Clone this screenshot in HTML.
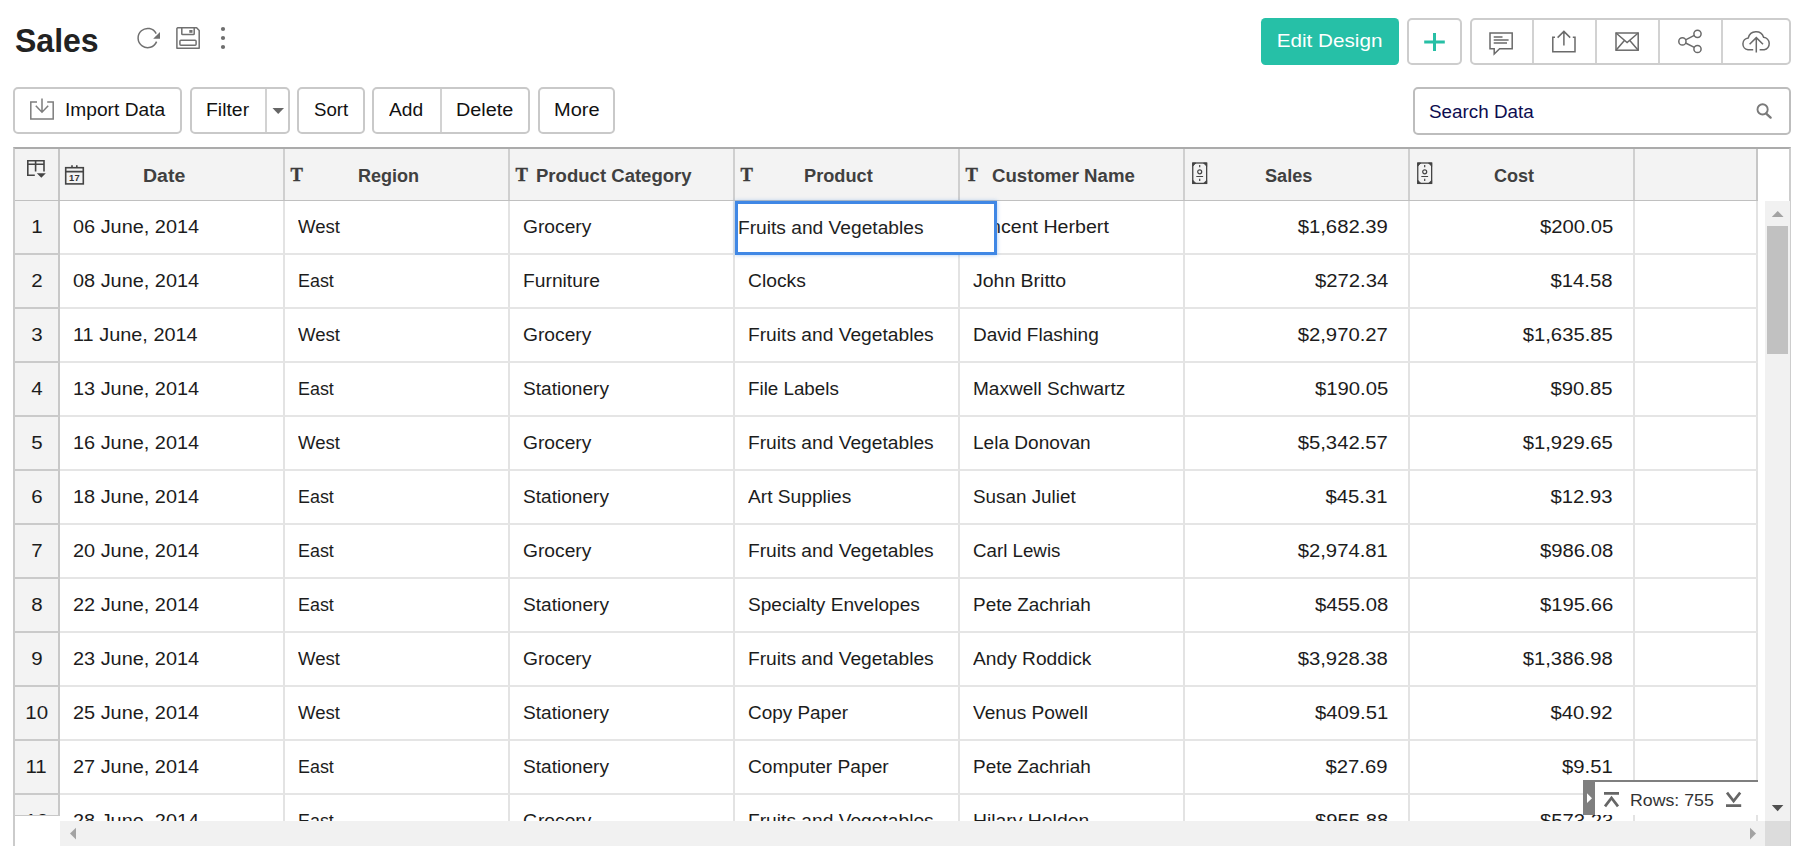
<!DOCTYPE html>
<html><head><meta charset="utf-8"><title>Sales</title>
<style>
*{box-sizing:border-box;margin:0;padding:0}
html,body{width:1804px;height:846px;overflow:hidden;background:#fff;font-family:"Liberation Sans",sans-serif;color:#222}
body{position:relative}
.abs{position:absolute}
svg{position:absolute;overflow:visible}
h1{position:absolute;left:14.7px;top:21px;font-size:32.5px;line-height:40px;font-weight:bold;color:#222;letter-spacing:0;transform:scaleX(0.985);transform-origin:0 50%}
.btn{position:absolute;top:87px;height:47px;border:2px solid #c9c9c9;border-radius:5px;background:#fff;font-size:17.5px;line-height:42px;color:#111;white-space:nowrap;letter-spacing:0}
.btn span.t{position:absolute;top:0;transform-origin:0 50%}
.btn .sep{position:absolute;top:0;bottom:0;width:2px;background:#d2d2d2}
.tbtn{position:absolute;top:18px;height:47px;border:2px solid #cdcdcd;border-radius:5px;background:#fff}
.tbtn .sep{position:absolute;top:0;bottom:0;width:2px;background:#d2d2d2}
.edit{position:absolute;left:1261px;top:18px;width:138px;height:47px;border-radius:4.5px;background:#26c0a7;color:#fff;font-size:19px;line-height:46.6px;text-align:center;letter-spacing:0}
.edit span{display:inline-block;transform:scaleX(1.088);transform-origin:50% 50%}
.search{position:absolute;left:1413px;top:87px;width:378px;height:48px;border:2px solid #bdbdbd;border-radius:5px;font-size:17.5px;line-height:46px;padding-left:14px;color:#0d0d50;letter-spacing:0}
.search span{display:inline-block;transform:scaleX(1.076);transform-origin:0 50%}
/* table */
.grid{position:absolute;left:13px;top:147px;width:1778px;height:700px;border-top:2px solid #ababab;border-left:2px solid #cbcbcb;border-right:2px solid #cdcdcd;overflow:hidden}
.thead{position:absolute;left:0;top:0;height:52px;width:1743px;background:#f3f3f3;display:flex}
.thead:after{content:"";position:absolute;left:0;right:0;top:50.5px;height:1.5px;background:#c0c0c0}
.th{height:51px;border-right:2px solid #cfcfcf;font-weight:bold;font-size:17.5px;color:#404040;line-height:54px;position:relative;flex:none;width:225px;letter-spacing:0}
.th.rn{width:45px;border-right:2px solid #c6c6c6}
.th.last{width:123px;border-right:2px solid #c6c6c6}
.th .lbl{position:absolute;top:0;white-space:nowrap;transform-origin:0 50%}
.th .T{position:absolute;left:5.4px;top:-1.25px;font-family:"Liberation Serif",serif;font-weight:bold;font-size:18.6px;color:#3c3c3c;letter-spacing:0;-webkit-text-stroke:0.35px #3c3c3c}
.tbody{position:absolute;left:0;top:52px;width:1743px}
.tr{display:flex;height:54px}
.td{flex:none;width:225px;height:54px;border-right:2px solid #e3e3e3;border-bottom:2px solid #e5e5e5;font-size:17.5px;line-height:52px;padding-left:13px;color:#1c1c1c;white-space:nowrap;overflow:hidden;letter-spacing:0}
.sx{display:inline-block;transform:scaleX(1.082);transform-origin:0 50%}
.td.date .sx{transform:scaleX(1.137)}
.td.num .sx{transform:scaleX(1.158);transform-origin:100% 50%}
.td.rn .sx{transform:scaleX(1.17);transform-origin:50% 50%}
.td.rn{width:45px;background:#f3f3f3;text-align:center;padding:0;border-right:2px solid #c8c8c8;border-bottom:2px solid #cacaca}
.td.num{text-align:right;padding-right:20px;padding-left:0}
.td.last{width:123px}
.vsb{position:absolute;left:1765px;top:201px;width:25px;height:620px;background:#f1f1f1}
.hsb{position:absolute;left:60px;top:821px;width:1705px;height:25px;background:#f1f1f1}
.corner{position:absolute;left:1765px;top:821px;width:25px;height:25px;background:#dcdcdc}
.editbox{position:absolute;left:735px;top:201px;width:262px;height:54px;border:3px solid #3f87e5;background:#fff;box-shadow:0 0 4px rgba(63,135,229,.45);font-size:17.5px;line-height:48px;padding-left:0;letter-spacing:0;color:#222;white-space:nowrap}
.rowsw{position:absolute;left:1583px;top:780px;width:175px;height:35px;background:#fff;border-top:2px solid #7f7f7f;font-size:16.5px;line-height:36px;color:#333}
.rowsw .h{position:absolute;left:0;top:-2px;width:12px;height:35px;background:#7f7f7f}
</style></head><body>
<h1>Sales</h1>

<!-- title icons -->
<svg style="left:125px;top:15px" width="120" height="50" viewBox="125 15 120 50" fill="none" stroke="#707070" stroke-width="1.5">
 <path d="M156.2 33.6 A9.6 9.6 0 1 0 156.6 41.6"/>
 <path d="M160 32 L160 38.7 L153.2 38.7 Z" fill="#707070" stroke="none"/>
 <path d="M177.6 27.8 H196.6 L199.2 30.6 V48.2 H176.9 V28.6 Z" stroke-linejoin="round"/>
 <path d="M181.8 28 V33.8 Q181.8 34.6 182.6 34.6 H193.4 Q194.2 34.6 194.2 33.8 V28"/>
 <rect x="189.3" y="30" width="3.2" height="2.8" fill="#707070" stroke="none"/>
 <rect x="179.9" y="40.2" width="16.2" height="5" rx="1"/>
 <circle cx="223" cy="29" r="2.1" fill="#6e6e6e" stroke="none"/>
 <circle cx="223" cy="38" r="2.1" fill="#6e6e6e" stroke="none"/>
 <circle cx="223" cy="47" r="2.1" fill="#6e6e6e" stroke="none"/>
</svg>

<div class="edit"><span>Edit Design</span></div>
<div class="tbtn" style="left:1407px;width:55px"></div>
<div class="tbtn" style="left:1470px;width:321px">
 <span class="sep" style="left:60px"></span><span class="sep" style="left:123px"></span><span class="sep" style="left:186px"></span><span class="sep" style="left:249px"></span>
</div>
<svg style="left:1400px;top:10px" width="400" height="65" viewBox="1400 10 400 65" fill="none" stroke="#6a6a6a" stroke-width="1.5">
 <path d="M1424.2 42 H1444.8 M1434.5 33 V51" stroke="#27bfa5" stroke-width="3"/>
 <!-- comment -->
 <path d="M1490 33 H1512.2 V48.7 H1499.6 L1494.2 54 V48.7 H1490 Z"/>
 <path d="M1493.7 37 H1502.5 M1493.7 40 H1508.6 M1493.7 43 H1507"/>
 <!-- export -->
 <path d="M1555 37.2 H1552.8 V51.7 H1575 V37.2 H1572.8"/>
 <path d="M1563.9 31.4 V45.5 M1557.6 37.6 L1563.9 31.4 L1570.2 37.6"/>
 <!-- mail -->
 <rect x="1616" y="33" width="22.2" height="17.2"/>
 <path d="M1616 33 L1627.1 42.6 L1638.2 33 M1616 50.2 L1624.4 40.4 M1638.2 50.2 L1629.8 40.4"/>
 <!-- share -->
 <circle cx="1697.5" cy="33.8" r="3.6"/><circle cx="1682.4" cy="41.4" r="3.6"/><circle cx="1697.5" cy="49" r="3.6"/>
 <path d="M1685.6 39.8 L1694.3 35.4 M1685.6 43 L1694.3 47.4"/>
 <!-- cloud -->
 <path d="M1753.2 49.8 H1748 A6 6 0 0 1 1748.3 37.9 A8 8 0 0 1 1763.6 37.2 A6.4 6.4 0 0 1 1764.2 49.8 H1759.6"/>
 <path d="M1756.3 52.6 V37.6 M1749.6 44.3 L1756.3 37.6 L1763 44.3"/>
</svg>

<!-- toolbar -->
<div class="btn" style="left:13px;width:169px"><span class="t" style="left:50px;transform:scaleX(1.095)">Import Data</span></div>
<div class="btn" style="left:190px;width:100px"><span class="sep" style="left:73px"></span><span class="t" style="left:13.5px;transform:scaleX(1.108)">Filter</span></div>
<div class="btn" style="left:297px;width:68px"><span class="t" style="left:14.5px;transform:scaleX(1.065)">Sort</span></div>
<div class="btn" style="left:372px;width:158px"><span class="sep" style="left:66px"></span><span class="t" style="left:15px;transform:scaleX(1.097)">Add</span><span class="t" style="left:82px;transform:scaleX(1.133)">Delete</span></div>
<div class="btn" style="left:538px;width:77px"><span class="t" style="left:13.5px;transform:scaleX(1.143)">More</span></div>
<svg style="left:10px;top:80px" width="300" height="60" viewBox="10 80 300 60" fill="none" stroke="#7d7d7d" stroke-width="1.5">
 <path d="M37 102 H30.8 V119 H53.2 V102 H47.2"/>
 <path d="M42 98.5 V112 M35.8 105.8 L42 112.2 L48.2 105.8"/>
 <path d="M272.5 108 H284 L278.2 114 Z" fill="#666" stroke="none"/>
</svg>
<div class="search"><span>Search Data</span></div>
<svg style="left:1750px;top:98px" width="30" height="26" viewBox="1750 98 30 26" fill="none" stroke="#7a7a7a">
 <circle cx="1762.6" cy="109.4" r="5.1" stroke-width="1.9"/>
 <path d="M1766.5 113.9 L1770.6 117.6" stroke-width="2.4" stroke-linecap="round"/>
</svg>

<div class="grid">
 <div class="thead">
  <div class="th rn"></div>
  <div class="th"><span class="lbl" style="left:82.6px;transform:scaleX(1.114)">Date</span></div>
  <div class="th"><span class="T">T</span><span class="lbl" style="left:73.3px;transform:scaleX(1.03)">Region</span></div>
  <div class="th"><span class="T">T</span><span class="lbl" style="left:26px;transform:scaleX(1.06)">Product Category</span></div>
  <div class="th"><span class="T">T</span><span class="lbl" style="left:69px;transform:scaleX(1.04)">Product</span></div>
  <div class="th"><span class="T">T</span><span class="lbl" style="left:32px;transform:scaleX(1.064)">Customer Name</span></div>
  <div class="th"><span class="lbl" style="left:80px;transform:scaleX(1.035)">Sales</span></div>
  <div class="th"><span class="lbl" style="left:83.5px;transform:scaleX(1.03)">Cost</span></div>
  <div class="th last"></div>
 </div>
 <div class="tbody">
<div class="tr"><div class="td rn"><span class="sx">1</span></div><div class="td date"><span class="sx">06 June, 2014</span></div><div class="td"><span class="sx" style="transform:scaleX(1.0625)">West</span></div><div class="td"><span class="sx" style="transform:scaleX(1.0987)">Grocery</span></div><div class="td"><span class="sx" style="transform:scaleX(1.097)">Fruits and Vegetables</span></div><div class="td"><span class="sx" style="transform:scaleX(1.12)">Vincent Herbert</span></div><div class="td num"><span class="sx">$1,682.39</span></div><div class="td num"><span class="sx">$200.05</span></div><div class="td last"></div></div>
<div class="tr"><div class="td rn"><span class="sx">2</span></div><div class="td date"><span class="sx">08 June, 2014</span></div><div class="td"><span class="sx" style="transform:scaleX(1.0235)">East</span></div><div class="td"><span class="sx" style="transform:scaleX(1.1004)">Furniture</span></div><div class="td"><span class="sx" style="transform:scaleX(1.101)">Clocks</span></div><div class="td"><span class="sx" style="transform:scaleX(1.112)">John Britto</span></div><div class="td num"><span class="sx">$272.34</span></div><div class="td num"><span class="sx">$14.58</span></div><div class="td last"></div></div>
<div class="tr"><div class="td rn"><span class="sx">3</span></div><div class="td date"><span class="sx">11 June, 2014</span></div><div class="td"><span class="sx" style="transform:scaleX(1.0625)">West</span></div><div class="td"><span class="sx" style="transform:scaleX(1.0987)">Grocery</span></div><div class="td"><span class="sx" style="transform:scaleX(1.097)">Fruits and Vegetables</span></div><div class="td"><span class="sx" style="transform:scaleX(1.086)">David Flashing</span></div><div class="td num"><span class="sx">$2,970.27</span></div><div class="td num"><span class="sx">$1,635.85</span></div><div class="td last"></div></div>
<div class="tr"><div class="td rn"><span class="sx">4</span></div><div class="td date"><span class="sx">13 June, 2014</span></div><div class="td"><span class="sx" style="transform:scaleX(1.0235)">East</span></div><div class="td"><span class="sx" style="transform:scaleX(1.0918)">Stationery</span></div><div class="td"><span class="sx" style="transform:scaleX(1.073)">File Labels</span></div><div class="td"><span class="sx" style="transform:scaleX(1.087)">Maxwell Schwartz</span></div><div class="td num"><span class="sx">$190.05</span></div><div class="td num"><span class="sx">$90.85</span></div><div class="td last"></div></div>
<div class="tr"><div class="td rn"><span class="sx">5</span></div><div class="td date"><span class="sx">16 June, 2014</span></div><div class="td"><span class="sx" style="transform:scaleX(1.0625)">West</span></div><div class="td"><span class="sx" style="transform:scaleX(1.0987)">Grocery</span></div><div class="td"><span class="sx" style="transform:scaleX(1.097)">Fruits and Vegetables</span></div><div class="td"><span class="sx" style="transform:scaleX(1.089)">Lela Donovan</span></div><div class="td num"><span class="sx">$5,342.57</span></div><div class="td num"><span class="sx">$1,929.65</span></div><div class="td last"></div></div>
<div class="tr"><div class="td rn"><span class="sx">6</span></div><div class="td date"><span class="sx">18 June, 2014</span></div><div class="td"><span class="sx" style="transform:scaleX(1.0235)">East</span></div><div class="td"><span class="sx" style="transform:scaleX(1.0918)">Stationery</span></div><div class="td"><span class="sx" style="transform:scaleX(1.095)">Art Supplies</span></div><div class="td"><span class="sx" style="transform:scaleX(1.077)">Susan Juliet</span></div><div class="td num"><span class="sx">$45.31</span></div><div class="td num"><span class="sx">$12.93</span></div><div class="td last"></div></div>
<div class="tr"><div class="td rn"><span class="sx">7</span></div><div class="td date"><span class="sx">20 June, 2014</span></div><div class="td"><span class="sx" style="transform:scaleX(1.0235)">East</span></div><div class="td"><span class="sx" style="transform:scaleX(1.0987)">Grocery</span></div><div class="td"><span class="sx" style="transform:scaleX(1.097)">Fruits and Vegetables</span></div><div class="td"><span class="sx" style="transform:scaleX(1.07)">Carl Lewis</span></div><div class="td num"><span class="sx">$2,974.81</span></div><div class="td num"><span class="sx">$986.08</span></div><div class="td last"></div></div>
<div class="tr"><div class="td rn"><span class="sx">8</span></div><div class="td date"><span class="sx">22 June, 2014</span></div><div class="td"><span class="sx" style="transform:scaleX(1.0235)">East</span></div><div class="td"><span class="sx" style="transform:scaleX(1.0918)">Stationery</span></div><div class="td"><span class="sx" style="transform:scaleX(1.09)">Specialty Envelopes</span></div><div class="td"><span class="sx" style="transform:scaleX(1.082)">Pete Zachriah</span></div><div class="td num"><span class="sx">$455.08</span></div><div class="td num"><span class="sx">$195.66</span></div><div class="td last"></div></div>
<div class="tr"><div class="td rn"><span class="sx">9</span></div><div class="td date"><span class="sx">23 June, 2014</span></div><div class="td"><span class="sx" style="transform:scaleX(1.0625)">West</span></div><div class="td"><span class="sx" style="transform:scaleX(1.0987)">Grocery</span></div><div class="td"><span class="sx" style="transform:scaleX(1.097)">Fruits and Vegetables</span></div><div class="td"><span class="sx" style="transform:scaleX(1.096)">Andy Roddick</span></div><div class="td num"><span class="sx">$3,928.38</span></div><div class="td num"><span class="sx">$1,386.98</span></div><div class="td last"></div></div>
<div class="tr"><div class="td rn"><span class="sx">10</span></div><div class="td date"><span class="sx">25 June, 2014</span></div><div class="td"><span class="sx" style="transform:scaleX(1.0625)">West</span></div><div class="td"><span class="sx" style="transform:scaleX(1.0918)">Stationery</span></div><div class="td"><span class="sx" style="transform:scaleX(1.082)">Copy Paper</span></div><div class="td"><span class="sx" style="transform:scaleX(1.094)">Venus Powell</span></div><div class="td num"><span class="sx">$409.51</span></div><div class="td num"><span class="sx">$40.92</span></div><div class="td last"></div></div>
<div class="tr"><div class="td rn"><span class="sx">11</span></div><div class="td date"><span class="sx">27 June, 2014</span></div><div class="td"><span class="sx" style="transform:scaleX(1.0235)">East</span></div><div class="td"><span class="sx" style="transform:scaleX(1.0918)">Stationery</span></div><div class="td"><span class="sx" style="transform:scaleX(1.096)">Computer Paper</span></div><div class="td"><span class="sx" style="transform:scaleX(1.082)">Pete Zachriah</span></div><div class="td num"><span class="sx">$27.69</span></div><div class="td num"><span class="sx">$9.51</span></div><div class="td last"></div></div>
<div class="tr"><div class="td rn"><span class="sx">12</span></div><div class="td date"><span class="sx">28 June, 2014</span></div><div class="td"><span class="sx" style="transform:scaleX(1.0235)">East</span></div><div class="td"><span class="sx" style="transform:scaleX(1.0987)">Grocery</span></div><div class="td"><span class="sx" style="transform:scaleX(1.097)">Fruits and Vegetables</span></div><div class="td"><span class="sx" style="transform:scaleX(1.106)">Hilary Holden</span></div><div class="td num"><span class="sx">$955.88</span></div><div class="td num"><span class="sx">$573.23</span></div><div class="td last"></div></div>
 </div>
</div>

<!-- header icons -->
<svg style="left:14px;top:148px" width="120" height="54" viewBox="14 148 120 54" fill="none" stroke="#444" stroke-width="1.6">
 <path d="M34.8 175.2 H27.8 V160.8 H44 V171.5"/>
 <path d="M27.8 164.2 H44 M35.6 160.8 V171.5"/>
 <path d="M36.8 173.2 H45.8 L41.3 177.8 Z" fill="#444" stroke="none"/>
 <rect x="65.7" y="167.7" width="17.6" height="16.2"/>
 <path d="M65.7 171.6 H83.3 M72 165.3 V167.7 M76.8 165.3 V167.7"/>
</svg>
<div class="abs" style="left:68px;top:173px;width:13px;font-size:8.5px;font-weight:bold;line-height:10px;color:#333;text-align:center;letter-spacing:0.2px;transform:scaleX(1.1)">17</div>
<svg id="cur1" style="left:1192px;top:162px" width="16" height="23" viewBox="0 0 16 23" fill="none" stroke="#444" stroke-width="1.4">
 <rect x="0.75" y="1" width="13.9" height="20.4" stroke-width="1.3"/>
 <path d="M0.75 1 H3.9 L0.75 4.2 Z M14.65 1 H11.5 L14.65 4.2 Z M0.75 21.4 H3.9 L0.75 18.2 Z M14.65 21.4 H11.5 L14.65 18.2 Z" fill="#444" stroke-width="0.8"/>
 <circle cx="7.7" cy="9.8" r="2" stroke-width="1.2"/>
 <path d="M4.3 14.5 H11.1 M7.7 3.1 V5.2 M7.7 16.8 V18.9" stroke-width="1.2"/>
</svg>
<svg id="cur2" style="left:1417px;top:162px" width="16" height="23" viewBox="0 0 16 23" fill="none" stroke="#444" stroke-width="1.4">
 <rect x="0.75" y="1" width="13.9" height="20.4" stroke-width="1.3"/>
 <path d="M0.75 1 H3.9 L0.75 4.2 Z M14.65 1 H11.5 L14.65 4.2 Z M0.75 21.4 H3.9 L0.75 18.2 Z M14.65 21.4 H11.5 L14.65 18.2 Z" fill="#444" stroke-width="0.8"/>
 <circle cx="7.7" cy="9.8" r="2" stroke-width="1.2"/>
 <path d="M4.3 14.5 H11.1 M7.7 3.1 V5.2 M7.7 16.8 V18.9" stroke-width="1.2"/>
</svg>

<div class="editbox"><span style="display:inline-block;transform:scaleX(1.096);transform-origin:0 50%;margin-left:-0.5px">Fruits and Vegetables</span></div>

<div class="abs" style="left:15px;top:815px;width:45px;height:31px;background:#fff;border-top:1px solid #c8c8c8"></div>
<div class="vsb"></div><div class="hsb"></div><div class="corner"></div>
<div class="abs" style="left:1767px;top:226px;width:21px;height:128px;background:#c1c1c1"></div>
<svg style="left:1760px;top:200px" width="40" height="646" viewBox="1760 200 40 646" stroke="none">
 <path d="M1771.8 217 L1777.7 211 L1783.6 217 Z" fill="#a3a3a3"/>
 <path d="M1771.8 805 H1783.4 L1777.6 811.2 Z" fill="#505050"/>
 <path d="M1750 827.7 L1756 833.5 L1750 839.4 Z" fill="#a3a3a3"/>
 <path d="M76 827.7 L70 833.5 L76 839.4 Z" fill="#a3a3a3"/>
</svg>

<div class="rowsw"><div class="h"></div><span class="abs" style="left:47px;top:0.3px;white-space:nowrap;transform:scaleX(1.075);transform-origin:0 50%">Rows: 755</span></div>
<svg style="left:1583px;top:780px" width="175" height="35" viewBox="1583 780 175 35" fill="none" stroke="#666" stroke-width="2.7">
 <path d="M1587 793.3 L1592 798.2 L1587 803 Z" fill="#fff" stroke="none"/>
 <path d="M1604 793.3 H1619 M1605 806.4 L1611.5 798 L1618 806.4"/>
 <path d="M1726 805.6 H1741.2 M1727 792.6 L1733.6 801 L1740.2 792.6"/>
</svg>
</body></html>
